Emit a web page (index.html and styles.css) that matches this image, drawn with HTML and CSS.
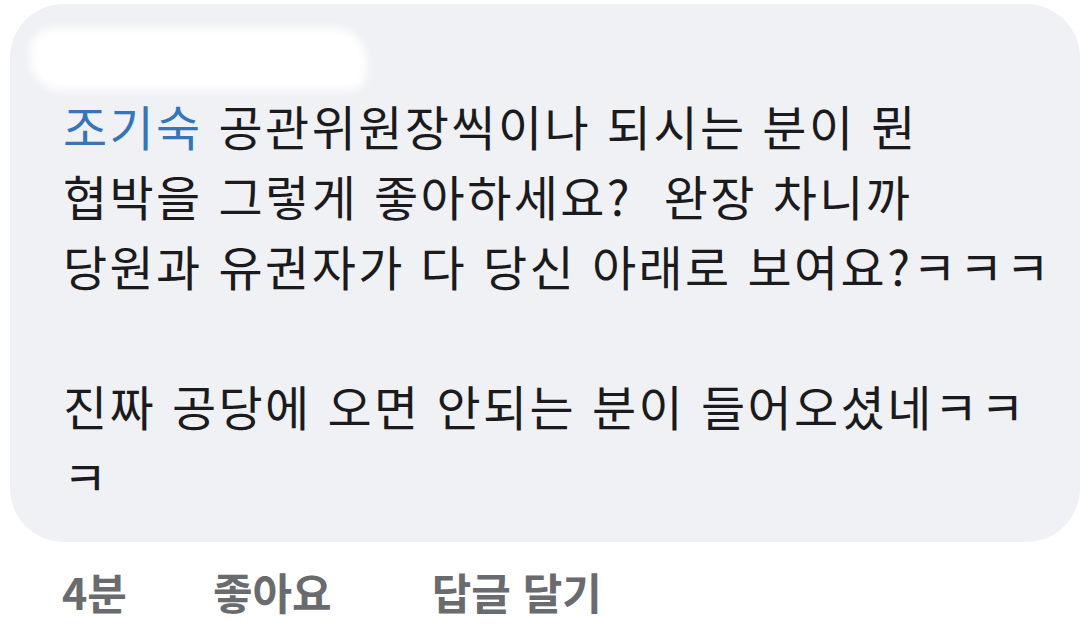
FILE: index.html
```html
<!DOCTYPE html>
<html lang="ko">
<head>
<meta charset="utf-8">
<link rel="stylesheet" href="styles.css">
</head>
<body>
<div class="comment">
  <div class="bubble">
    <div class="author"><div class="blur"></div></div>
    <p class="text"><span class="mention">조기숙</span> 공관위원장씩이나 되시는 분이 뭔<br>협박을 그렇게 좋아하세요?&nbsp; 완장 차니까<br>당원과 유권자가 다 당신 아래로 보여요?ㅋㅋㅋ<br><br>진짜 공당에 오면 안되는 분이 들어오셨네ㅋㅋ<br>ㅋ</p>
  </div>
  <div class="actions">
    <span class="time">4분</span>
    <span class="act">좋아요</span>
    <span class="act">답글 달기</span>
  </div>
</div>
</body>
</html>
```

FILE: styles.css
```css
html, body {
  margin: 0;
  padding: 0;
  background: #ffffff;
}
body {
  width: 1080px;
  height: 643px;
  overflow: hidden;
  font-family: "Noto Sans CJK KR", "Noto Sans", sans-serif;
}
.comment {
  padding-top: 4px;
  padding-left: 10px;
}
.bubble {
  width: 1070px;
  box-sizing: border-box;
  background: #f0f1f5;
  border-radius: 54px;
  padding: 22px 20px 32px 53px;
}
.author {
  height: 62px;
  margin-left: -32px;
}
.blur {
  width: 336px;
  height: 62px;
  margin-top: 2px;
  background: #ffffff;
  border-radius: 22px 34px 18px 30px;
  filter: blur(5px);
}
.text {
  margin: 0;
  font-size: 48px;
  letter-spacing: 2.4px;
  line-height: 70px;
  color: #1b1b1d;
  white-space: nowrap;
}
.line-last {
  display: inline;
}
.mention {
  color: #3675b8;
}
.actions {
  display: flex;
  gap: 86px;
  padding-left: 52px;
  margin-top: 24px;
  font-size: 43px;
  line-height: 50px;
  font-weight: 700;
  color: #6a6b6f;
}
.act + .act {
  margin-left: 14px;
}
```
